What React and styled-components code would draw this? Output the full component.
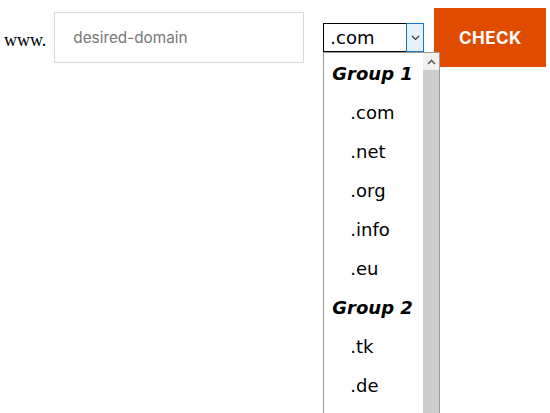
import React from 'react';
import styled, { createGlobalStyle } from 'styled-components';

const groups = [
  { label: 'Group 1', items: ['.com', '.net', '.org', '.info', '.eu'] },
  { label: 'Group 2', items: ['.tk', '.de'] }
];

const Global = createGlobalStyle`
  html, body, #root {
    margin: 0;
    height: 100%;
    background: #fff;
  }
`;

const Page = styled.div`
  height: 100vh;
  box-sizing: border-box;
  padding: 8px 0 0 4px;
`;

const Form = styled.form`
  display: flex;
  align-items: center;
`;

const Prefix = styled.span`
  font-family: 'Liberation Serif', serif;
  font-size: 18px;
  color: #000;
  margin-right: 8px;
  margin-top: 6px;
`;

const Domain = styled.input`
  box-sizing: border-box;
  width: 250px;
  height: 51px;
  border: 1px solid #d9d9d9;
  padding: 0 18px;
  font-family: Inter, sans-serif;
  font-size: 15.3px;
  outline: none;
  &::placeholder {
    color: #777;
  }
`;

const SelectWrap = styled.div`
  position: relative;
  z-index: 2;
  margin-left: 19px;
  margin-right: 10px;
`;

const SelectBox = styled.div`
  box-sizing: border-box;
  width: 101px;
  height: 29px;
  display: flex;
  border: 1px solid #000;
  border-right: none;
  font-family: 'DejaVu Sans', sans-serif;
  font-size: 18px;
`;

const Value = styled.span`
  flex: 1;
  padding-left: 6px;
  line-height: 27px;
`;

const Arrow = styled.span`
  box-sizing: border-box;
  width: 18px;
  margin-top: -1px;
  height: 29px;
  border: 1px solid #0f78d4;
  background: #e5f1fb;
  display: flex;
  align-items: center;
  justify-content: center;
`;

const Menu = styled.div`
  position: absolute;
  top: 29px;
  left: 0;
  width: 117px;
  height: 361px;
  box-sizing: border-box;
  border: 1px solid #9a9a9a;
  border-bottom: none;
  background: #fff;
  display: flex;
  overflow: hidden;
`;

const List = styled.div`
  flex: 1;
  padding-top: 1px;
  font-family: 'DejaVu Sans', sans-serif;
  font-size: 18px;
  color: #000;
`;

const Row = styled.div`
  height: 39px;
  line-height: 39px;
  padding-left: ${p => (p.group ? '8px' : '26px')};
  font-weight: ${p => (p.group ? 'bold' : 'normal')};
  font-style: ${p => (p.group ? 'italic' : 'normal')};
  white-space: nowrap;
`;

const Scrollbar = styled.div`
  width: 16px;
  display: flex;
  flex-direction: column;
`;

const ScrollUp = styled.div`
  height: 17px;
  display: flex;
  align-items: center;
  justify-content: center;
  background: #f0f0f0;
`;

const Thumb = styled.div`
  flex: 1;
  background: #cdcdcd;
`;

const Check = styled.button`
  width: 112px;
  height: 59px;
  border: none;
  background: #df4c00;
  color: #fff;
  font-family: Inter, sans-serif;
  font-weight: 700;
  font-size: 17px;
  letter-spacing: 0.5px;
  cursor: pointer;
`;

export default function App() {
  return (
    <Page>
      <Global />
      <Form onSubmit={e => e.preventDefault()}>
        <Prefix>www.</Prefix>
        <Domain placeholder="desired-domain" />
        <SelectWrap>
          <SelectBox>
            <Value>.com</Value>
            <Arrow>
              <svg width="9" height="6" viewBox="0 0 9 6">
                <path d="M1 1l3.5 3.5L8 1" fill="none" stroke="#333" strokeWidth="1.1" />
              </svg>
            </Arrow>
          </SelectBox>
          <Menu>
            <List>
              {groups.map(g => (
                <React.Fragment key={g.label}>
                  <Row group>{g.label}</Row>
                  {g.items.map(item => (
                    <Row key={item}>{item}</Row>
                  ))}
                </React.Fragment>
              ))}
            </List>
            <Scrollbar>
              <ScrollUp>
                <svg width="9" height="6" viewBox="0 0 9 6">
                  <path d="M1 5l3.5-3.5L8 5" fill="none" stroke="#606060" strokeWidth="1.6" />
                </svg>
              </ScrollUp>
              <Thumb />
            </Scrollbar>
          </Menu>
        </SelectWrap>
        <Check type="submit">CHECK</Check>
      </Form>
    </Page>
  );
}
